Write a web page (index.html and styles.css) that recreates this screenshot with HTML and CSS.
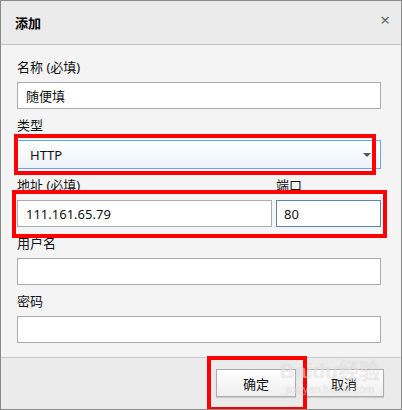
FILE: index.html
```html
<!DOCTYPE html>
<html lang="zh-CN">
<head>
    <meta charset="UTF-8">
    <meta name="viewport" content="width=device-width, initial-scale=1.0">
    <title>添加</title>
    <link rel="stylesheet" href="styles.css">
</head>
<body>
    <div class="dialog">
        <div class="dialog-header">
            <span class="dialog-title">添加</span>
            <span class="close">&times;</span>
        </div>

        <form class="dialog-body">
            <div class="field">
                <label for="name">名称 (必填)</label>
                <input type="text" id="name" value="随便填">
            </div>

            <div class="field">
                <label>类型</label>
                <div class="select">
                    <span>HTTP</span>
                    <span class="caret"></span>
                </div>
            </div>

            <div class="field-row">
                <div class="field grow">
                    <label for="host">地址 (必填)</label>
                    <input type="text" id="host" value="111.161.65.79">
                </div>
                <div class="field port">
                    <label for="port">端口</label>
                    <input type="text" id="port" class="focused" value="80">
                </div>
            </div>

            <div class="field">
                <label for="user">用户名</label>
                <input type="text" id="user">
            </div>

            <div class="field">
                <label for="pass">密码</label>
                <input type="password" id="pass">
            </div>
        </form>

        <div class="dialog-footer">
            <button type="button">确定</button>
            <button type="button">取消</button>
        </div>

        <!-- annotation frames -->
        <div class="mark mark-type"></div>
        <div class="mark mark-addr"></div>
        <div class="mark mark-ok"></div>

        <div class="watermark">
            <span class="wm-big">Baidu经验</span>
            <span class="wm-small">jingyan.baidu.com</span>
        </div>
    </div>
</body>
</html>
```

FILE: styles.css
```css
* {
    box-sizing: border-box;
}
body {
    margin: 0;
    font-family: "Noto Sans", "Noto Sans CJK SC", sans-serif;
    font-size: 13px;
    color: #111;
}
.dialog {
    position: relative;
    width: 402px;
    height: 410px;
    border: 1px solid #8a8a8a;
    background-color: #f4f4f4;
    display: flex;
    flex-direction: column;
    overflow: hidden;
}
.dialog-header {
    height: 44px;
    flex-shrink: 0;
    background-color: #ebebeb;
    border-bottom: 1px solid #c4c4c4;
    display: flex;
    align-items: center;
    justify-content: space-between;
    padding: 0 11px 0 14px;
}
.dialog-title {
    font-weight: bold;
    font-size: 13px;
    color: #000;
}
.close {
    font-size: 17px;
    color: #666;
    line-height: 1;
    margin-top: -6px;
}
.dialog-body {
    flex: 1;
    padding: 11px 20px 0 16px;
    display: flex;
    flex-direction: column;
    gap: 5px;
}
.field {
    display: flex;
    flex-direction: column;
    gap: 4px;
}
.field label {
    line-height: 22px;
    height: 22px;
    color: #111;
}
.field-row {
    display: flex;
    gap: 4px;
}
.grow {
    flex: 1;
}
.port {
    width: 105px;
}
input {
    height: 27px;
    width: 100%;
    border: 1px solid #ababab;
    background: #fff;
    padding: 0 8px;
    font-family: "Noto Sans", "Noto Sans CJK SC", sans-serif;
    font-size: 13px;
    color: #111;
    outline: none;
}
input.focused {
    border-color: #5a86b6;
    padding-left: 7px;
}
.select {
    height: 29px;
    border: 1px solid #64a6ea;
    background: linear-gradient(#ffffff, #edf3fc);
    display: flex;
    align-items: center;
    justify-content: space-between;
    padding: 0 9px 0 12px;
}
.caret {
    width: 0;
    height: 0;
    border-left: 4px solid transparent;
    border-right: 4px solid transparent;
    border-top: 4px solid #555;
}
.dialog-footer {
    height: 52px;
    flex-shrink: 0;
    background-color: #ebebeb;
    border-top: 1px solid #c8c8c8;
    display: flex;
    justify-content: flex-end;
    align-items: flex-start;
    gap: 8px;
    padding: 11px 17px 0 0;
}
.dialog-footer button {
    width: 80px;
    height: 28px;
    border: 1px solid #adadad;
    background: linear-gradient(#ffffff, #efefef);
    box-shadow: 0 1px 1px rgba(0, 0, 0, 0.12);
    font-family: "Noto Sans CJK SC", sans-serif;
    font-size: 13px;
    color: #111;
}
.mark {
    position: absolute;
    border: 4px solid #ff0000;
}
.mark-type {
    left: 13px;
    top: 133px;
    width: 362px;
    height: 41px;
}
.mark-addr {
    left: 11px;
    top: 189px;
    width: 375px;
    height: 48px;
}
.mark-ok {
    left: 206px;
    top: 355px;
    width: 100px;
    height: 55px;
}
/* faint site stamp over the footer */
.watermark {
    position: absolute;
    left: 284px;
    top: 358px;
    width: 90px;
    display: flex;
    flex-direction: column;
    align-items: center;
    color: rgba(255, 255, 255, 0.5);
    text-shadow: 0 0 1px rgba(0, 0, 0, 0.15);
    pointer-events: none;
}
.wm-big {
    font-family: "Liberation Sans", "Noto Sans CJK SC", sans-serif;
    font-size: 21px;
    font-weight: bold;
    line-height: 24px;
    white-space: nowrap;
}
.wm-small {
    font-family: "Liberation Sans", sans-serif;
    font-size: 11px;
    line-height: 13px;
}
```
